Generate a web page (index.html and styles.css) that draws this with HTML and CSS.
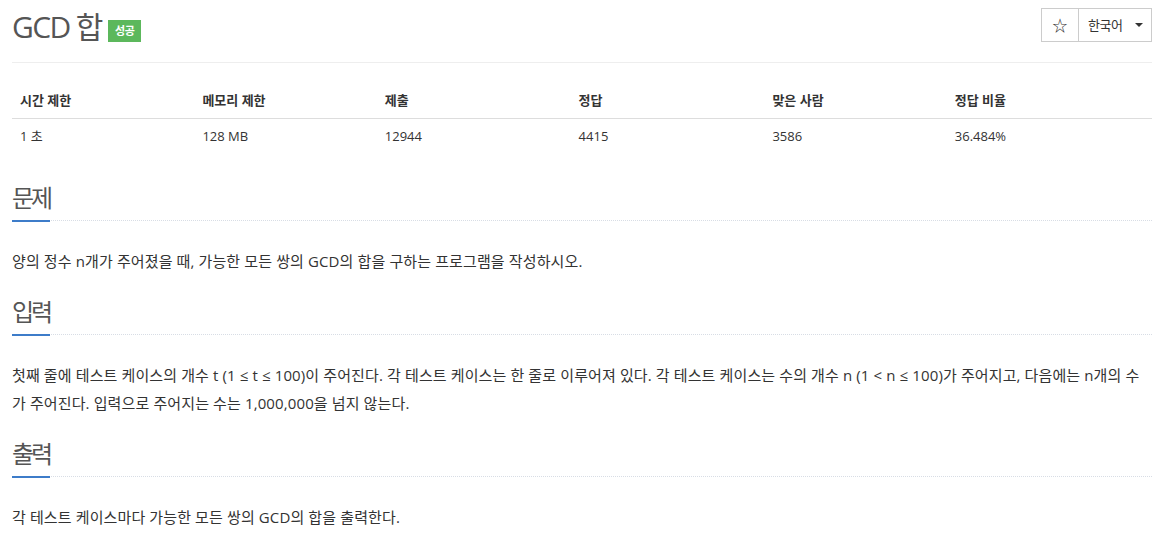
FILE: index.html
```html
<!DOCTYPE html>
<html lang="ko">
<head>
<meta charset="utf-8">
<title>GCD 합</title>
<link rel="stylesheet" href="styles.css">
</head>
<body>
<div class="container">
  <div class="page-header">
    <h1 class="title">GCD 합 <span class="label">성공</span></h1>
    <div class="btn-group">
      <button class="btn btn-star">☆</button>
      <button class="btn btn-lang"><span>한국어</span><span class="caret"></span></button>
    </div>
  </div>

  <table class="info">
    <thead>
      <tr>
        <th class="w16">시간 제한</th>
        <th class="w16">메모리 제한</th>
        <th class="w17">제출</th>
        <th class="w17">정답</th>
        <th class="w16">맞은 사람</th>
        <th class="w18">정답 비율</th>
      </tr>
    </thead>
    <tbody>
      <tr>
        <td>1 초 </td>
        <td>128 MB</td>
        <td>12944</td>
        <td>4415</td>
        <td>3586</td>
        <td>36.484%</td>
      </tr>
    </tbody>
  </table>

  <section class="problem-section">
    <div class="headline"><h2><span>문제</span></h2></div>
    <p class="problem-text">양의 정수 n개가 주어졌을 때, 가능한 모든 쌍의 GCD의 합을 구하는 프로그램을 작성하시오.</p>
  </section>

  <section class="problem-section">
    <div class="headline"><h2><span>입력</span></h2></div>
    <p class="problem-text">첫째 줄에 테스트 케이스의 개수 t (1 ≤ t ≤ 100)이 주어진다. 각 테스트 케이스는 한 줄로 이루어져 있다. 각 테스트 케이스는 수의 개수 n (1 &lt; n ≤ 100)가 주어지고, 다음에는 n개의 수가 주어진다. 입력으로 주어지는 수는 1,000,000을 넘지 않는다.</p>
  </section>

  <section class="problem-section">
    <div class="headline"><h2><span>출력</span></h2></div>
    <p class="problem-text">각 테스트 케이스마다 가능한 모든 쌍의 GCD의 합을 출력한다.</p>
  </section>
</div>
</body>
</html>
```

FILE: styles.css
```css
* { box-sizing: border-box; }

body {
  margin: 0;
  font-family: "Open Sans", "Noto Sans CJK KR", sans-serif;
  color: #333;
  background: #fff;
}

.container {
  width: 1140px;
  margin-left: 12px;
}

.page-header {
  display: flex;
  justify-content: space-between;
  align-items: flex-start;
  border-bottom: 1px solid #eee;
  padding-top: 8px;
  height: 63px;
}

.title {
  margin: 2px 0 0;
  font-size: 30px;
  line-height: 33px;
  font-weight: 400;
  color: #555;
  letter-spacing: -1.6px;
}

.label {
  display: inline-block;
  vertical-align: 3px;
  background: #5cb85c;
  color: #fff;
  font-size: 11px;
  font-weight: 700;
  line-height: 22px;
  padding: 0 7px;
  letter-spacing: -0.5px;
}

.btn-group {
  display: flex;
}

.btn {
  font-family: "Open Sans", "Noto Sans CJK KR", sans-serif;
  font-size: 14px;
  line-height: 20px;
  padding: 6px 12px;
  background: #fff;
  border: 1px solid #ccc;
  color: #333;
  height: 34px;
  margin: 0;
  white-space: nowrap;
}

.btn-star {
  width: 38px;
  padding: 6px 0;
  font-size: 15px;
}

.btn-lang {
  margin-left: -1px;
  width: 74px;
  padding: 6px 8px 6px 9px;
  display: flex;
  align-items: center;
  justify-content: space-between;
  font-size: 13px;
  letter-spacing: -0.5px;
}

.caret {
  display: inline-block;
  width: 0;
  height: 0;
  border-top: 4px solid #333;
  border-left: 4px solid transparent;
  border-right: 4px solid transparent;
}

.info {
  width: 100%;
  border-collapse: collapse;
  margin-top: 20px;
  margin-bottom: 28px;
  font-size: 13px;
  color: #333;
}

.info th, .info td {
  text-align: left;
  padding: 8px;
  line-height: 19px;
}

.info th {
  font-weight: 700;
  border-bottom: 1px solid #ddd;
}

.w16 { width: 16%; }
.w17 { width: 17%; }
.w18 { width: 18%; }

.headline {
  margin-top: 21px;
}

.headline h2 {
  margin: 0;
  font-size: 24px;
  line-height: 32px;
  font-weight: 400;
  color: #555;
  border-bottom: 1px dotted #d8dde5;
  height: 39px;
  letter-spacing: -3px;
}

.headline h2 span {
  display: inline-block;
  border-bottom: 2px solid #3d7cc9;
  height: 40px;
}

.problem-text {
  margin: 26px 0 0;
  font-size: 15px;
  line-height: 28px;
  color: #333;
  letter-spacing: 0.12px;
}
```
